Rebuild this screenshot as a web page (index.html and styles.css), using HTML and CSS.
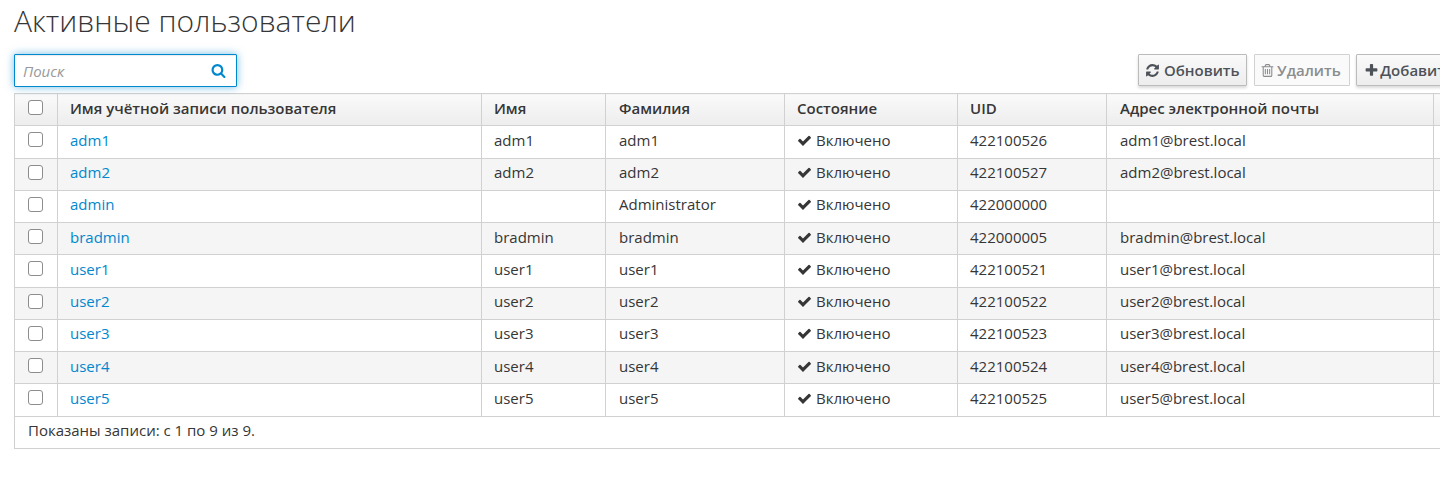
FILE: index.html
```html
<!DOCTYPE html>
<html>
	<head>
		<title>Активные пользователи</title>
		<meta charset="utf-8"/>
		<link rel="stylesheet" href="styles.css">
	</head>
	<body>
		<svg class="sprite" xmlns="http://www.w3.org/2000/svg">
			<symbol id="i-check" viewBox="0 0 1792 1792"><path d="M1671 566q0 40-28 68l-724 724-136 136q-28 28-68 28t-68-28l-136-136-362-362q-28-28-28-68t28-68l136-136q28-28 68-28t68 28l294 295 656-657q28-28 68-28t68 28l136 136q28 28 28 68z"/></symbol>
			<symbol id="i-search" viewBox="0 0 1792 1792"><path d="M1216 832q0-185-131.5-316.5t-316.5-131.5-316.5 131.5-131.5 316.5 131.5 316.5 316.5 131.5 316.5-131.5 131.5-316.5zm512 832q0 52-38 90t-90 38q-54 0-90-38l-343-342q-179 124-399 124-143 0-273.5-55.5t-225-150-150-225-55.5-273.5 55.5-273.5 150-225 225-150 273.5-55.5 273.5 55.5 225 150 150 225 55.5 273.5q0 220-124 399l343 343q37 37 37 90z"/></symbol>
			<symbol id="i-refresh" viewBox="0 0 1792 1792"><path d="M1639 1056q0 5-1 7-64 268-268 434.5t-478 166.5q-146 0-282.5-55t-243.5-157l-129 129q-19 19-45 19t-45-19-19-45v-448q0-26 19-45t45-19h448q26 0 45 19t19 45-19 45l-137 137q71 66 161 102t187 36q134 0 250-65t186-179q11-17 53-117 8-23 30-23h192q13 0 22.5 9.5t9.5 22.5zm25-800v448q0 26-19 45t-45 19h-448q-26 0-45-19t-19-45 19-45l138-138q-148-137-349-137-134 0-250 65t-186 179q-11 17-53 117-8 23-30 23h-199q-13 0-22.5-9.5t-9.5-22.5v-7q65-268 270-434.5t480-166.5q146 0 284 55.5t245 156.5l130-129q19-19 45-19t45 19 19 45z"/></symbol>
			<symbol id="i-trash" viewBox="0 0 1792 1792"><path d="M704 736v576q0 14-9 23t-23 9h-64q-14 0-23-9t-9-23v-576q0-14 9-23t23-9h64q14 0 23 9t9 23zm256 0v576q0 14-9 23t-23 9h-64q-14 0-23-9t-9-23v-576q0-14 9-23t23-9h64q14 0 23 9t9 23zm256 0v576q0 14-9 23t-23 9h-64q-14 0-23-9t-9-23v-576q0-14 9-23t23-9h64q14 0 23 9t9 23zm128 724v-948h-896v948q0 22 7 40.5t14.5 27 10.5 8.5h832q3 0 10.5-8.5t14.5-27 7-40.5zm-672-1076h448l-48-117q-7-9-17-11h-317q-10 2-17 11zm928 32v64q0 14-9 23t-23 9h-96v948q0 83-47 143.5t-113 60.5h-832q-66 0-113-58.5t-47-141.5v-952h-96q-14 0-23-9t-9-23v-64q0-14 9-23t23-9h309l70-167q15-37 54-63t79-26h320q40 0 79 26t54 63l70 167h309q14 0 23 9t9 23z"/></symbol>
			<symbol id="i-plus" viewBox="0 0 1792 1792"><path d="M1600 736v192q0 40-28 68t-68 28h-416v416q0 40-28 68t-68 28h-192q-40 0-68-28t-28-68v-416h-416q-40 0-68-28t-28-68v-192q0-40 28-68t68-28h416v-416q0-40 28-68t68-28h192q40 0 68 28t28 68v416h416q40 0 68 28t28 68z"/></symbol>
		</svg>

		<div class="page">
			<h1 class="title">Активные пользователи</h1>

			<div class="toolbar">
				<div class="search">
					<input class="search-input" type="text" placeholder="Поиск">
					<svg class="search-icon"><use href="#i-search"/></svg>
				</div>
				<div class="actions">
					<button class="btn btn-refresh"><svg class="icon"><use href="#i-refresh"/></svg>Обновить</button>
					<button class="btn btn-disabled"><svg class="icon"><use href="#i-trash"/></svg>Удалить</button>
					<button class="btn btn-add"><svg class="icon"><use href="#i-plus"/></svg>Добавить</button>
				</div>
			</div>

			<table class="grid">
				<colgroup>
					<col class="c-check">
					<col class="c-login">
					<col class="c-first">
					<col class="c-last">
					<col class="c-state">
					<col class="c-uid">
					<col class="c-mail">
					<col>
				</colgroup>
				<thead>
					<tr>
						<th class="cell-check"><input class="check" type="checkbox"></th>
						<th>Имя учётной записи пользователя</th>
						<th>Имя</th>
						<th>Фамилия</th>
						<th>Состояние</th>
						<th>UID</th>
						<th>Адрес электронной почты</th>
						<th></th>
					</tr>
				</thead>
				<tbody>
					<tr>
						<td class="cell-check"><input class="check" type="checkbox"></td>
						<td><a href="#">adm1</a></td>
						<td>adm1</td>
						<td>adm1</td>
						<td><svg class="icon"><use href="#i-check"/></svg>Включено</td>
						<td>422100526</td>
						<td>adm1@brest.local</td>
						<td></td>
					</tr>
					<tr>
						<td class="cell-check"><input class="check" type="checkbox"></td>
						<td><a href="#">adm2</a></td>
						<td>adm2</td>
						<td>adm2</td>
						<td><svg class="icon"><use href="#i-check"/></svg>Включено</td>
						<td>422100527</td>
						<td>adm2@brest.local</td>
						<td></td>
					</tr>
					<tr>
						<td class="cell-check"><input class="check" type="checkbox"></td>
						<td><a href="#">admin</a></td>
						<td></td>
						<td>Administrator</td>
						<td><svg class="icon"><use href="#i-check"/></svg>Включено</td>
						<td>422000000</td>
						<td></td>
						<td></td>
					</tr>
					<tr>
						<td class="cell-check"><input class="check" type="checkbox"></td>
						<td><a href="#">bradmin</a></td>
						<td>bradmin</td>
						<td>bradmin</td>
						<td><svg class="icon"><use href="#i-check"/></svg>Включено</td>
						<td>422000005</td>
						<td>bradmin@brest.local</td>
						<td></td>
					</tr>
					<tr>
						<td class="cell-check"><input class="check" type="checkbox"></td>
						<td><a href="#">user1</a></td>
						<td>user1</td>
						<td>user1</td>
						<td><svg class="icon"><use href="#i-check"/></svg>Включено</td>
						<td>422100521</td>
						<td>user1@brest.local</td>
						<td></td>
					</tr>
					<tr>
						<td class="cell-check"><input class="check" type="checkbox"></td>
						<td><a href="#">user2</a></td>
						<td>user2</td>
						<td>user2</td>
						<td><svg class="icon"><use href="#i-check"/></svg>Включено</td>
						<td>422100522</td>
						<td>user2@brest.local</td>
						<td></td>
					</tr>
					<tr>
						<td class="cell-check"><input class="check" type="checkbox"></td>
						<td><a href="#">user3</a></td>
						<td>user3</td>
						<td>user3</td>
						<td><svg class="icon"><use href="#i-check"/></svg>Включено</td>
						<td>422100523</td>
						<td>user3@brest.local</td>
						<td></td>
					</tr>
					<tr>
						<td class="cell-check"><input class="check" type="checkbox"></td>
						<td><a href="#">user4</a></td>
						<td>user4</td>
						<td>user4</td>
						<td><svg class="icon"><use href="#i-check"/></svg>Включено</td>
						<td>422100524</td>
						<td>user4@brest.local</td>
						<td></td>
					</tr>
					<tr>
						<td class="cell-check"><input class="check" type="checkbox"></td>
						<td><a href="#">user5</a></td>
						<td>user5</td>
						<td>user5</td>
						<td><svg class="icon"><use href="#i-check"/></svg>Включено</td>
						<td>422100525</td>
						<td>user5@brest.local</td>
						<td></td>
					</tr>
				</tbody>
				<tfoot>
					<tr>
						<td class="cell-foot" colspan="8">Показаны записи: с 1 по 9 из 9.</td>
					</tr>
				</tfoot>
			</table>
		</div>
	</body>
</html>
```

FILE: styles.css
```css
html, body {
	height: 100%;
	margin: 0;
	padding: 0;
	overflow: hidden;
}

body {
	font-family: 'Open Sans', sans-serif;
	font-size: 15px;
	color: #363636;
	background: #fff;
}

.sprite {
	display: none;
}

.page {
	width: 1447px;
	padding-left: 14px;
}

.title {
	margin: 0;
	height: 54px;
	font-size: 30px;
	font-weight: 300;
	line-height: 42px;
	color: #363636;
}

.toolbar {
	display: flex;
	justify-content: space-between;
	height: 39px;
}

.search {
	display: flex;
	align-items: center;
	width: 223px;
	height: 33px;
	box-sizing: border-box;
	padding: 0 10px 0 8px;
	border: 1px solid #0088ce;
	border-radius: 1px;
	box-shadow: 0 0 8px rgba(0, 136, 206, 0.55), inset 0 1px 1px rgba(3, 3, 3, 0.08);
}

.search-input {
	flex: 1;
	min-width: 0;
	border: 0;
	padding: 0;
	outline: 0;
	font: italic 15px 'Open Sans', sans-serif;
	color: #363636;
}

.search-input::placeholder {
	color: #999;
	opacity: 1;
}

.search-icon {
	width: 15px;
	height: 15px;
	fill: #0088ce;
}

.actions {
	display: flex;
	gap: 7px;
	height: 32px;
}

.btn {
	display: flex;
	align-items: center;
	height: 32px;
	border: 1px solid #bbb;
	border-radius: 1px;
	background: linear-gradient(to bottom, #fafafa, #ededed);
	box-shadow: 0 2px 3px rgba(3, 3, 3, 0.15);
	font: 600 15px 'Open Sans', sans-serif;
	color: #4d5258;
	white-space: nowrap;
}

.btn-refresh {
	padding: 0 6px 0 6.5px;
}

.btn-refresh .icon {
	margin-right: 3.5px;
}

.btn-disabled {
	padding: 0 8.5px 0 5.5px;
	margin-right: -1px;
	background: #fafafa;
	border-color: #d1d1d1;
	box-shadow: none;
	color: #8b8d8f;
}

.btn-disabled .icon {
	margin-right: 2px;
	fill: #8b8d8f;
}

.btn-add {
	padding: 0 6px 0 6.5px;
}

.btn-add .icon {
	margin-right: 1.5px;
}

.icon {
	width: 15px;
	height: 15px;
	margin-right: 4px;
	fill: currentColor;
	vertical-align: -2px;
}

.grid {
	width: 100%;
	table-layout: fixed;
	border-collapse: collapse;
	border: 1px solid #d1d1d1;
}

.c-check { width: 43px; }
.c-login { width: 424px; }
.c-first { width: 124px; }
.c-last { width: 179px; }
.c-state { width: 173px; }
.c-uid { width: 149px; }
.c-mail { width: 327px; }

.grid th,
.grid td {
	padding: 0 12px 4px;
	border: 1px solid #d1d1d1;
	text-align: left;
	white-space: nowrap;
}

/* these two columns sit a pixel further in */
.grid th:nth-child(4),
.grid td:nth-child(4),
.grid th:nth-child(7),
.grid td:nth-child(7),
.grid .cell-foot {
	padding-left: 13px;
}

.grid th {
	height: 32.3px;
	box-sizing: border-box;
	background: linear-gradient(to bottom, #fafafa, #ededed);
	font-weight: 600;
}

.grid td {
	height: 32.25px;
	box-sizing: border-box;
}

.grid tbody tr:nth-child(even) td {
	background: #f5f5f5;
}

.grid .cell-check {
	padding: 0 2px 4px 0;
	text-align: center;
}

.grid a {
	color: #0088ce;
	text-decoration: none;
}

.check {
	appearance: none;
	display: inline-block;
	width: 15px;
	height: 15px;
	margin: 0 0 3px;
	box-sizing: border-box;
	border: 1.5px solid #8b8d8f;
	border-radius: 3px;
	background: #fff;
	vertical-align: middle;
}
```
